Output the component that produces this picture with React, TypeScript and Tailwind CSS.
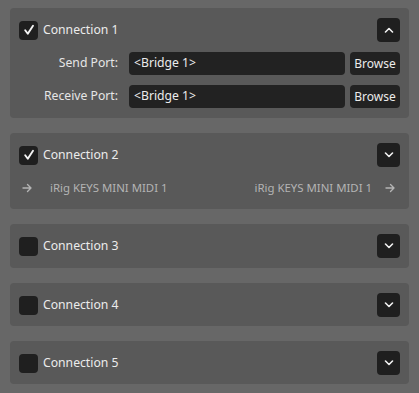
import React from 'react';

const CheckBox: React.FC<{ checked: boolean }> = ({ checked }) => (
  <div className="w-[19px] h-[19px] rounded-[4px] bg-[#1f1f1f] flex items-center justify-center shrink-0">
    {checked && (
      <svg width="12" height="12" viewBox="0 0 12 12" fill="none">
        <path d="M2.2 6.2l2.6 3.6L10 1.8" stroke="#f4f4f4" strokeWidth="1.9" strokeLinecap="round" strokeLinejoin="round" />
      </svg>
    )}
  </div>
);

const ToggleButton: React.FC<{ open: boolean }> = ({ open }) => (
  <button className="w-[23px] h-[24px] rounded-[4px] bg-[#1f1f1f] flex items-center justify-center">
    <svg width="10" height="6" viewBox="0 0 10 6" fill="none">
      <path
        d={open ? 'M1.5 5L5 1.5L8.5 5' : 'M1.5 1L5 4.5L8.5 1'}
        stroke="#f2f2f2"
        strokeWidth="1.6"
        strokeLinecap="round"
        strokeLinejoin="round"
      />
    </svg>
  </button>
);

const Arrow: React.FC = () => (
  <svg width="10" height="10" viewBox="0 0 10 10" fill="none">
    <path d="M1 5h8M5.5 1.5L9 5l-3.5 3.5" stroke="#b4b4b4" strokeWidth="1.4" strokeLinecap="round" strokeLinejoin="round" />
  </svg>
);

const Header: React.FC<{ name: string; checked: boolean; open: boolean }> = ({ name, checked, open }) => (
  <div className="flex items-center h-[24px]">
    <CheckBox checked={checked} />
    <span className="ml-[5px] text-[12.2px] text-[#ececec]">{name}</span>
    <div className="flex-1" />
    <ToggleButton open={open} />
  </div>
);

const PortRow: React.FC<{ label: string }> = ({ label }) => (
  <div className="flex items-center h-[23px]">
    <span className="w-[99px] text-right text-[12.2px] text-[#e6e6e6]">{label}</span>
    <div className="ml-[11px] flex-1 h-full rounded-[4px] bg-[#222222] flex items-center px-[5px] text-[12.2px] text-[#ececec]">
      &lt;Bridge 1&gt;
    </div>
    <button className="ml-[5px] w-[50px] h-full rounded-[4px] bg-[#222222] text-[12px] text-[#ececec]">Browse</button>
  </div>
);

export default function App() {
  return (
    <div
      className="w-[419px] h-[393px] bg-[#676767] px-[10px] pt-[8px] flex flex-col gap-[15px]"
      style={{ fontFamily: '"Noto Sans", sans-serif' }}
    >
      <div className="bg-[#595959] rounded-[4px] px-[9px] py-[10px] flex flex-col gap-[10px]">
        <Header name="Connection 1" checked open />
        <PortRow label="Send Port:" />
        <PortRow label="Receive Port:" />
      </div>
      <div className="bg-[#595959] rounded-[4px] px-[9px] py-[10px] flex flex-col">
        <Header name="Connection 2" checked={true} open={false} />
        <div className="flex items-center h-[22px] mt-[10px] text-[11.4px] text-[#b4b4b4]">
          <span className="ml-[3px]"><Arrow /></span>
          <span className="ml-[18px]">iRig KEYS MINI MIDI 1</span>
          <div className="flex-1" />
          <span>iRig KEYS MINI MIDI 1</span>
          <span className="ml-[13px] mr-[5px]"><Arrow /></span>
        </div>
      </div>
      {['Connection 3', 'Connection 4', 'Connection 5'].map((n, i) => (
        <div key={n} className={`bg-[#595959] rounded-[4px] px-[9px] ${i === 0 ? 'py-[10px]' : 'pt-[10px] pb-[9px]'}`}>
          <Header name={n} checked={false} open={false} />
        </div>
      ))}
    </div>
  );
}
